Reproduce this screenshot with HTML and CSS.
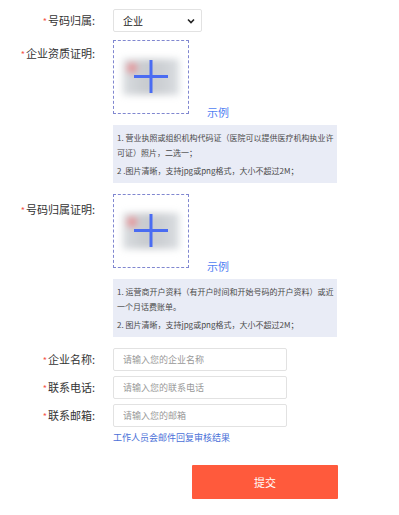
FILE: index.html
```html
<!DOCTYPE html>
<html lang="zh-CN">
<head>
<meta charset="utf-8">
<title>号码认证</title>
<link rel="stylesheet" href="styles.css">
</head>
<body>
<form class="form">
  <div class="row row-select">
    <label class="label"><span class="star">*</span>号码归属:</label>
    <div class="select">
      <span>企业</span>
      <svg class="chev" width="8" height="6" viewBox="0 0 8 6"><path d="M1 1.5 L4 4.5 L7 1.5" fill="none" stroke="#222" stroke-width="1.6"/></svg>
    </div>
  </div>

  <div class="row row-upload">
    <label class="label label-top"><span class="star">*</span>企业资质证明:</label>
    <div class="ctrl">
      <div class="upload-line">
        <div class="upload">
          <div class="thumb"><span class="dot"></span></div>
          <svg class="plus" width="36" height="36" viewBox="0 0 36 36"><path d="M18 1 V34 M1 17.5 H35" stroke="#4a6cf2" stroke-width="3" fill="none"/></svg>
        </div>
        <a class="example">示例</a>
      </div>
      <div class="info">
        <p>1. 营业执照或组织机构代码证（医院可以提供医疗机构执业许可证）照片，二选一；</p>
        <p class="p2">2 .图片清晰，支持jpg或png格式，大小不超过2M；</p>
      </div>
    </div>
  </div>

  <div class="row row-upload row-upload2">
    <label class="label label-top2"><span class="star">*</span>号码归属证明:</label>
    <div class="ctrl">
      <div class="upload-line">
        <div class="upload">
          <div class="thumb"><span class="dot"></span></div>
          <svg class="plus" width="36" height="36" viewBox="0 0 36 36"><path d="M18 1 V34 M1 17.5 H35" stroke="#4a6cf2" stroke-width="3" fill="none"/></svg>
        </div>
        <a class="example">示例</a>
      </div>
      <div class="info">
        <p>1. 运营商开户资料（有开户时间和开始号码的开户资料）或近一个月话费账单。</p>
        <p class="p2">2. 图片清晰，支持jpg或png格式，大小不超过2M；</p>
      </div>
    </div>
  </div>

  <div class="fields">
    <div class="row row-input">
      <label class="label"><span class="star">*</span>企业名称:</label>
      <input class="input" type="text" placeholder="请输入您的企业名称">
    </div>
    <div class="row row-input">
      <label class="label"><span class="star">*</span>联系电话:</label>
      <input class="input" type="text" placeholder="请输入您的联系电话">
    </div>
    <div class="row row-input">
      <label class="label"><span class="star">*</span>联系邮箱:</label>
      <input class="input" type="text" placeholder="请输入您的邮箱">
    </div>
  </div>

  <div class="row row-note">
    <span></span>
    <a class="note">工作人员会邮件回复审核结果</a>
  </div>

  <div class="actions">
    <button type="button" class="submit">提交</button>
  </div>
</form>
</body>
</html>
```

FILE: styles.css
```css
* { box-sizing: border-box; }
html, body { margin: 0; padding: 0; background: #fff; }
body {
  width: 399px;
  font-family: "Noto Sans CJK SC", "Noto Sans", sans-serif;
  color: #333;
}
.form { padding-top: 9px; }
.row {
  display: grid;
  grid-template-columns: 95px 224px;
  column-gap: 18px;
}
.label {
  font-size: 11px;
  line-height: 14px;
  text-align: right;
  color: #333;
  white-space: nowrap;
}
.star { color: #f5564a; font-size: 9px; margin-right: 1px; }
.row-select { align-items: center; }
.select {
  width: 89px;
  height: 23px;
  border: 1px solid #e2e2e2;
  border-radius: 2px;
  display: flex;
  align-items: center;
  justify-content: space-between;
  padding: 0 6px 0 9px;
  font-size: 10px;
  color: #222;
}
.row-upload { margin-top: 8px; }
.row-upload2 { margin-top: 11px; }
.label-top { padding-top: 6px; }
.label-top2 { padding-top: 8px; }
.upload-line {
  display: flex;
  align-items: flex-end;
  gap: 18px;
}
.upload {
  position: relative;
  width: 76px;
  height: 74px;
  border: 1.5px dashed #8087d0;
  display: flex;
  align-items: center;
  justify-content: center;
}
.thumb {
  position: relative;
  width: 56px;
  height: 36px;
  background: linear-gradient(90deg, #d9dde0 0%, #c8cbcf 40%, #cdd0d4 70%, #dadee1 100%);
  filter: blur(3.5px);
}
.dot {
  position: absolute;
  left: 4px;
  top: 4px;
  width: 10px;
  height: 10px;
  border-radius: 50%;
  background: #e88c90;
}
.plus {
  position: absolute;
  left: 50%;
  top: 50%;
  margin-left: -18px;
  margin-top: -18px;
}
.example {
  font-size: 11px;
  line-height: 14px;
  color: #4f7ef2;
  margin-bottom: -5px;
}
.info {
  margin-top: 11px;
  width: 224px;
  background: #e9ecf6;
  padding: 5px 1px 5px 4px;
  font-size: 8px;
  line-height: 15px;
  color: #4a4a4a;
}
.info p { margin: 0; }
.info .p2 { margin-top: 3px; }
.fields {
  margin-top: 11px;
  display: flex;
  flex-direction: column;
  gap: 5px;
}
.row-input { align-items: center; }
.input {
  width: 174px;
  height: 23px;
  border: 1px solid #e2e2e2;
  border-radius: 2px;
  padding: 0 9px;
  font-family: "Noto Sans CJK SC", sans-serif;
  font-size: 9px;
  color: #333;
  outline: none;
}
.input::placeholder { color: #999; }
.row-note { margin-top: 5px; }
.note {
  font-size: 9px;
  line-height: 12px;
  color: #4a6fd8;
}
.actions { margin-top: 21px; padding-left: 192px; }
.submit {
  width: 146px;
  height: 34px;
  border: none;
  border-radius: 1px;
  background: #ff5a3c;
  color: #fff;
  font-family: "Noto Sans CJK SC", sans-serif;
  font-size: 11px;
}
```
